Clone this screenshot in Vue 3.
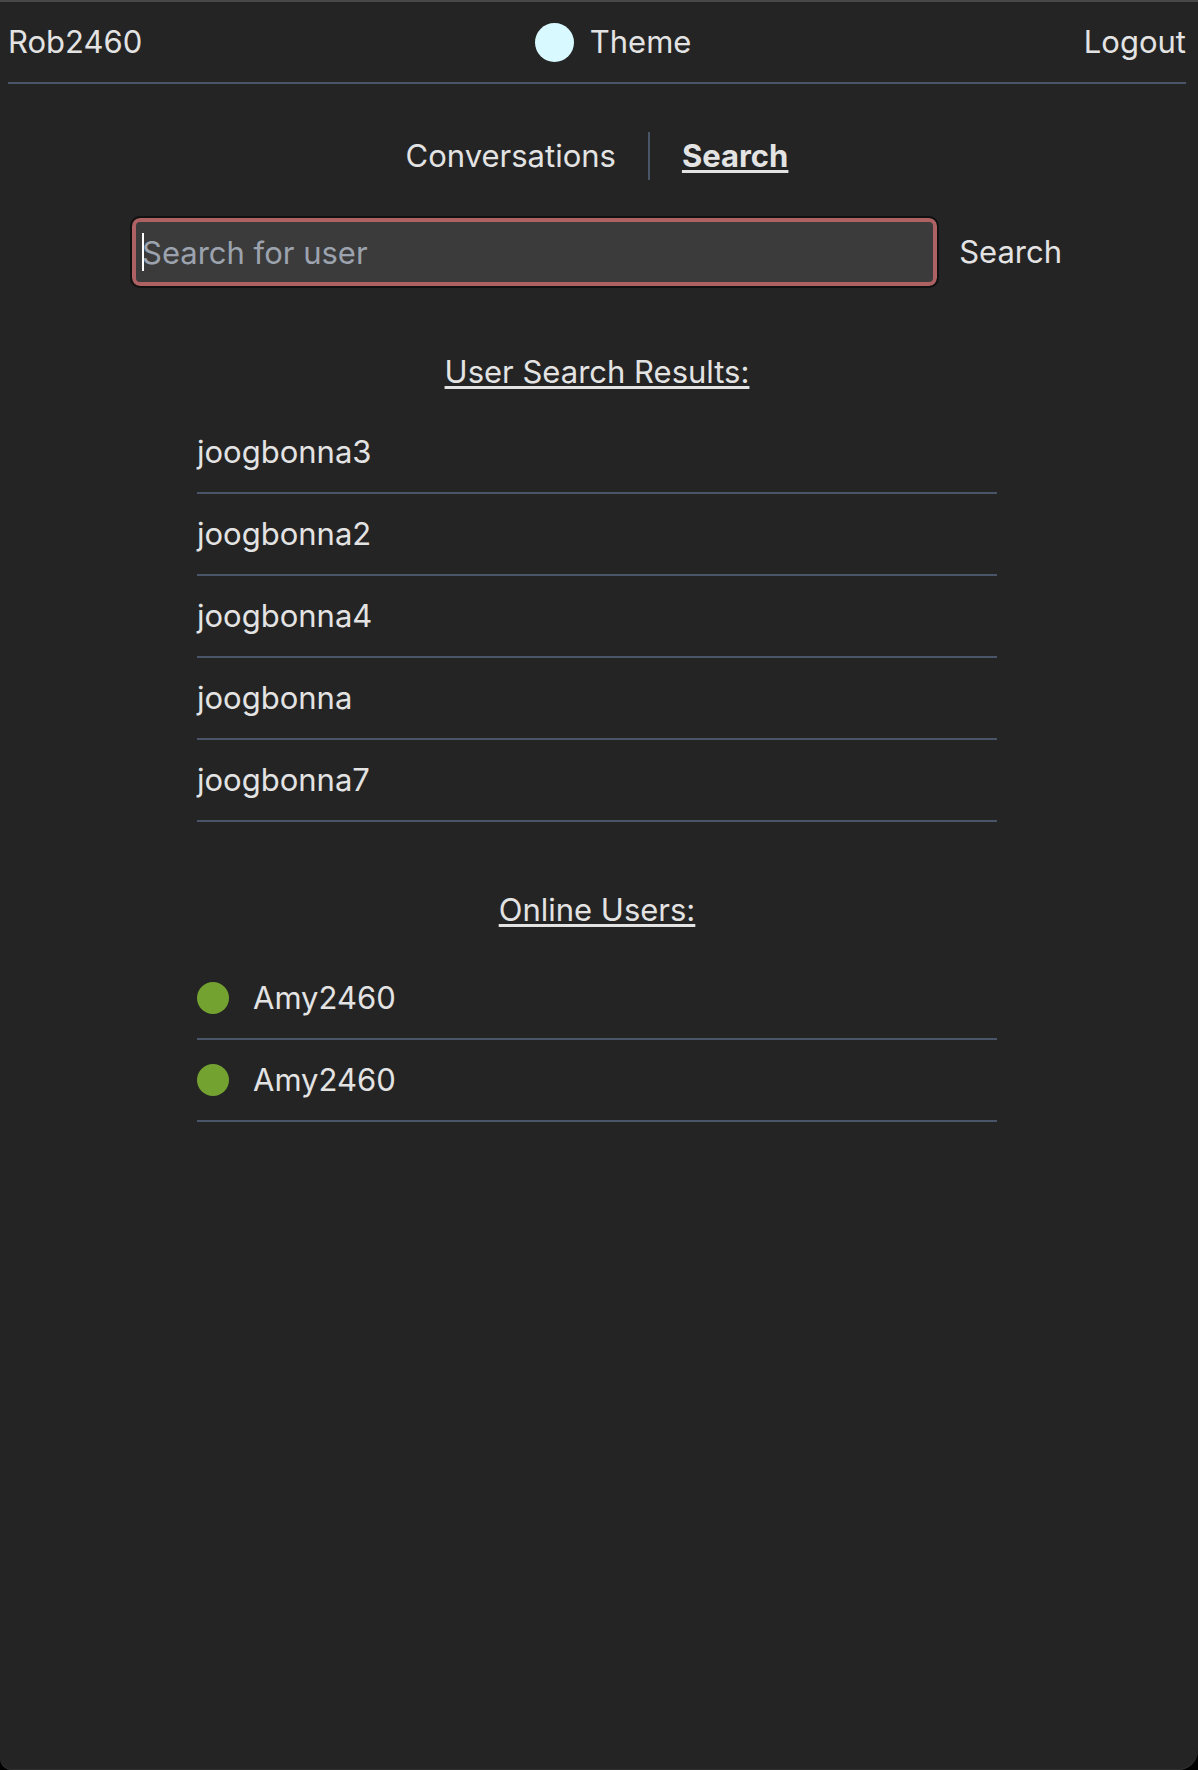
<script setup>
import { ref } from 'vue'

const query = ref('')
const results = ['joogbonna3', 'joogbonna2', 'joogbonna4', 'joogbonna', 'joogbonna7']
const online = [
  { id: 1, name: 'Amy2460' },
  { id: 2, name: 'Amy2460' },
]
</script>

<template>
  <div class="window">
    <header class="topbar">
      <a href="#profile">Rob2460</a>
      <button type="button" class="theme"><span class="swatch"></span>Theme</button>
      <button type="button">Logout</button>
    </header>

    <nav class="tabs">
      <a href="#conversations" class="tab">Conversations</a>
      <a href="#search" class="tab active" aria-current="page">Search</a>
    </nav>

    <form class="search" @submit.prevent>
      <div class="field">
        <input v-model="query" type="text" placeholder="Search for user" aria-label="Search for user" />
        <span v-if="!query" class="caret"></span>
      </div>
      <button type="submit">Search</button>
    </form>

    <section class="results">
      <h2>User Search Results:</h2>
      <ul>
        <li v-for="name in results" :key="name">{{ name }}</li>
      </ul>
    </section>

    <section class="online">
      <h2>Online Users:</h2>
      <ul>
        <li v-for="user in online" :key="user.id"><span class="dot"></span>{{ user.name }}</li>
      </ul>
    </section>
  </div>
</template>

<style>
html {
  background: #000;
}
body {
  margin: 0;
}
</style>

<style scoped>
.window {
  box-sizing: border-box;
  min-height: 100vh;
  padding: 0 12px 0 8px;
  border-top: 2px solid #484848;
  border-radius: 0 0 20px 12px;
  box-shadow: inset 0 -1px 0 #303030;
  background: #242424;
  color: #e3e3e3;
  font: 400 31px/48px Inter, "Liberation Sans", sans-serif;
}
a {
  color: inherit;
  text-decoration: none;
}
button {
  padding: 0;
  border: 0;
  background: none;
  color: inherit;
  font: inherit;
  cursor: pointer;
}
.topbar {
  display: flex;
  align-items: center;
  justify-content: space-between;
  height: 80px;
  border-bottom: 2px solid #4a5568;
}
.theme {
  display: flex;
  align-items: center;
  gap: 16px;
}
.swatch {
  width: 39px;
  height: 39px;
  border-radius: 50%;
  background: #d7f9ff;
}
.tabs {
  display: flex;
  justify-content: center;
  margin-top: 48px;
}
.tab {
  padding: 0 32px;
}
.tab + .tab {
  border-left: 2px solid #4a5568;
}
.active {
  font-weight: 700;
}
.active,
h2 {
  text-decoration: underline;
  text-decoration-thickness: 3px;
  text-underline-offset: 3px;
}
.search {
  display: flex;
  align-items: center;
  gap: 22px;
  max-width: 930px;
  margin: 38px auto 0;
}
.field {
  position: relative;
  flex: 1;
}
input {
  display: block;
  box-sizing: border-box;
  width: 100%;
  height: 68px;
  padding: 0 6px;
  border: 4px solid #ad6163;
  border-radius: 8px;
  outline: 2px solid #111;
  background: #3b3b3b;
  color: inherit;
  font: inherit;
}
input::placeholder {
  color: #9ca3af;
  opacity: 1;
}
.caret {
  position: absolute;
  top: 15px;
  left: 10px;
  width: 2px;
  height: 38px;
  background: #fff;
}
section {
  max-width: 800px;
  margin: 0 auto;
}
.results {
  margin-top: 62px;
}
.online {
  margin-top: 64px;
}
h2 {
  margin: 0;
  font: inherit;
  text-align: center;
}
ul {
  margin: 16px 0 0;
  padding: 0;
  list-style: none;
}
.online ul {
  margin-top: 24px;
}
li {
  display: flex;
  align-items: center;
  gap: 24px;
  height: 80px;
  border-bottom: 2px solid #4a5568;
}
.dot {
  width: 32px;
  height: 32px;
  border-radius: 50%;
  background: #73a231;
}
</style>
